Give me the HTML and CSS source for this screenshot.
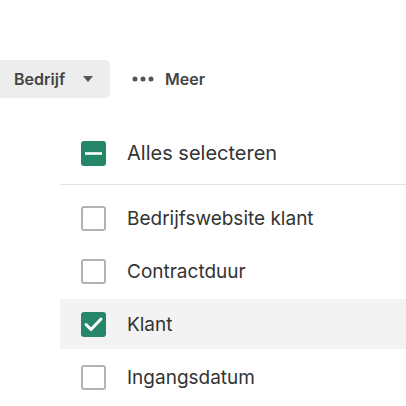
FILE: index.html
```html
<!DOCTYPE html>
<html lang="nl">
<head>
<meta charset="utf-8">
<link rel="stylesheet" href="styles.css">
</head>
<body>
<div class="toolbar">
  <button class="btn btn-active">Bedrijf
    <svg class="caret" width="10" height="6" viewBox="0 0 10 6"><path d="M0 0h10L5 6z" fill="#555"/></svg>
  </button>
  <button class="btn btn-more">
    <svg class="dots" width="22" height="6" viewBox="0 0 22 6"><circle cx="3" cy="3" r="2.5" fill="#555"/><circle cx="11" cy="3" r="2.5" fill="#555"/><circle cx="19" cy="3" r="2.5" fill="#555"/></svg>
    Meer
  </button>
</div>
<div class="panel">
  <div class="row head">
    <span class="cb checked"><svg width="25" height="25" viewBox="0 0 25 25"><path d="M4 12.5h17" stroke="#fff" stroke-width="2.6"/></svg></span>
    <span class="label">Alles selecteren</span>
  </div>
  <div class="sep"></div>
  <div class="list">
    <div class="row"><span class="cb"></span><span class="label">Bedrijfswebsite klant</span></div>
    <div class="row"><span class="cb"></span><span class="label">Contractduur</span></div>
    <div class="row hl"><span class="cb checked"><svg width="25" height="25" viewBox="0 0 25 25"><path d="M5 12.5l5 5L20 7" stroke="#fff" stroke-width="3" fill="none" stroke-linecap="round" stroke-linejoin="round"/></svg></span><span class="label">Klant</span></div>
    <div class="row"><span class="cb"></span><span class="label">Ingangsdatum</span></div>
  </div>
</div>
</body>
</html>
```
FILE: styles.css
```css
html, body {
  margin: 0;
  padding: 0;
  background: #fff;
  font-family: Inter, "Liberation Sans", sans-serif;
  color: #333;
  overflow: hidden;
}
.toolbar {
  display: flex;
  align-items: center;
  gap: 22px;
  margin-top: 60px;
  height: 38px;
}
.btn {
  font-family: inherit;
  font-size: 16px;
  font-weight: 600;
  color: #444;
  border: 0;
  background: transparent;
  height: 38px;
  display: flex;
  align-items: center;
  padding: 0;
}
.btn-active {
  background: #ededed;
  border-radius: 0 5px 5px 0;
  padding: 0 17px 0 14px;
  width: 110px;
}
.btn-active .caret {
  margin-left: auto;
}
.btn-more {
  gap: 11px;
}
.panel {
  margin-left: 60px;
  margin-top: 30px;
}
.row {
  display: flex;
  align-items: center;
  height: 50px;
  padding-left: 21px;
  gap: 21px;
}
.label {
  font-size: 19px;
  color: #333;
}
.head .label {
  font-size: 20px;
}
.sep {
  height: 1px;
  background: #e2e2e2;
  margin-top: 6px;
}
.list {
  display: flex;
  flex-direction: column;
  gap: 3px;
  padding-top: 8px;
}
.hl {
  background: #f3f3f3;
}
.cb {
  width: 25px;
  height: 25px;
  box-sizing: border-box;
  border: 2px solid #b3b3b3;
  border-radius: 3px;
  display: flex;
  flex: none;
}
.cb.checked {
  border: 0;
  background: #25866a;
}
.cb svg {
  display: block;
}
```
